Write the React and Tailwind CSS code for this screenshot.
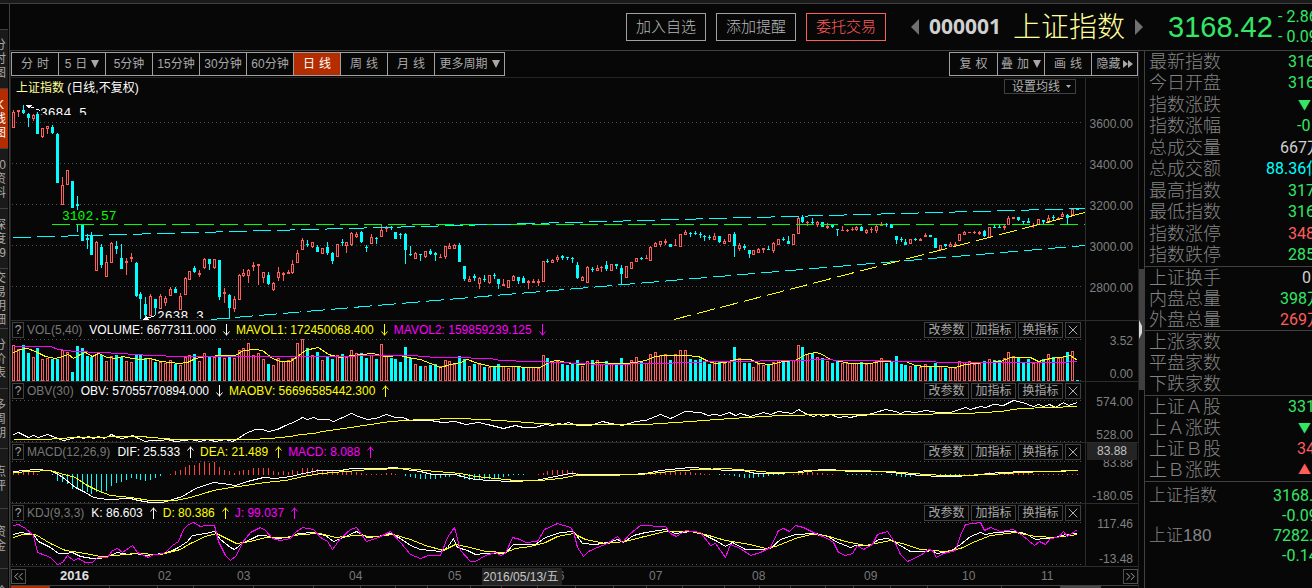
import React from 'react';
import { ChevronsLeft, ChevronsRight, X } from 'lucide-react';

const RED = '#ff5c5c';
const CYAN = '#00ffff';
const YELLOW = '#ffff00';
const MAGENTA = '#ff00ff';

// direction, high, body top, body bottom, low
const CANDLES = `u 110 112 128 128;u 110 110 112 117;d 105 110 113 114;d 113 114 118 127;u 114 115 119 121;d 112 114 134 134;u 128 128 137 138;u 126 126 129 134;d 125 127 133 134;d 133 134 183 183;
u 177 185 205 205;u 170 170 185 185;d 181 181 208 208;d 196 204 206 232;d 222 222 241 241;d 234 238 240 249;d 232 235 255 255;u 241 242 271 271;d 244 247 265 268;u 255 262 277 277;
u 242 243 263 263;d 241 246 249 254;d 244 258 269 269;u 258 261 263 275;u 253 257 259 262;d 262 263 296 297;d 292 294 299 319;d 297 304 315 318;u 294 296 316 316;d 299 299 308 315;
u 294 296 309 309;u 296 298 303 306;u 287 289 296 296;d 287 289 293 293;u 293 296 310 310;u 277 278 295 295;u 271 271 280 280;d 266 268 272 273;u 270 273 275 277;u 258 259 268 269;
d 259 259 264 270;u 259 259 268 269;d 260 260 297 300;u 288 292 294 303;d 294 295 308 319;u 296 299 309 312;u 274 275 300 300;u 269 273 276 277;u 269 270 276 283;u 262 265 267 271;
u 264 264 266 285;u 272 272 278 283;d 272 275 284 285;u 282 283 290 291;u 267 272 278 281;u 272 273 275 281;u 270 272 274 274;u 260 264 273 274;u 250 253 263 263;u 238 240 250 250;
d 240 244 245 247;u 242 242 247 248;d 245 247 252 252;u 248 248 254 254;d 242 247 253 255;d 252 253 261 264;u 244 244 257 257;d 239 242 243 246;u 242 242 246 253;u 232 233 245 246;
u 232 234 237 238;d 231 232 242 243;d 245 247 248 252;u 234 237 244 244;d 237 238 239 244;u 225 230 237 237;u 226 228 229 232;d 226 227 228 230;d 232 232 239 239;d 233 234 235 239;
d 233 234 250 264;d 246 254 255 256;u 252 253 259 259;d 254 254 255 261;u 251 251 257 258;d 249 251 254 255;d 252 253 255 261;u 254 257 258 258;u 246 246 257 259;u 243 246 249 249;
u 244 245 249 249;d 243 245 262 262;d 266 266 279 281;u 276 279 282 282;d 274 276 278 281;u 277 278 284 289;d 275 279 280 282;u 275 275 283 284;d 273 275 276 279;d 279 279 284 289;
u 279 284 286 286;u 280 280 288 288;u 275 276 281 281;d 277 277 281 284;d 276 278 283 283;u 280 281 283 289;u 279 281 283 283;u 279 281 283 286;u 261 261 282 282;d 259 261 262 263;
u 259 260 263 263;u 255 257 260 262;d 255 256 258 260;d 257 257 258 260;d 257 258 259 263;d 262 265 278 279;u 276 277 281 281;u 266 267 283 283;d 267 269 270 272;u 265 268 271 271;
u 266 267 268 272;d 261 265 269 271;u 264 264 271 271;d 264 264 266 269;d 265 268 274 284;u 266 266 278 278;u 262 262 269 269;u 258 258 262 262;d 257 258 259 260;u 255 258 259 259;
u 246 247 261 261;u 242 243 247 247;u 241 241 245 247;u 239 241 243 245;d 244 244 247 247;u 239 245 246 246;u 234 234 247 247;u 230 232 235 235;d 232 233 234 237;d 231 233 234 235;
d 232 234 235 238;d 235 236 237 241;d 235 237 238 240;u 233 236 240 240;d 236 236 242 243;u 239 241 244 244;u 234 234 242 242;d 232 234 246 257;u 243 245 249 251;d 244 246 248 250;
d 250 250 254 258;u 250 250 255 255;u 248 249 253 253;u 248 248 250 253;d 246 249 250 250;u 242 243 251 253;u 239 239 245 245;d 237 239 240 241;d 236 241 244 244;u 234 234 245 245;
u 216 218 234 234;d 215 217 222 223;u 221 222 223 226;d 218 222 223 225;u 221 222 225 227;d 222 222 227 227;u 223 226 228 229;d 225 225 227 228;d 229 229 230 236;u 226 230 231 231;
u 229 230 231 232;u 227 229 230 231;u 226 227 230 231;d 226 227 231 231;u 229 230 233 234;u 227 229 230 233;u 225 226 231 233;u 222 225 226 226;d 223 224 225 227;d 224 224 228 228;
d 236 236 240 244;d 237 239 240 242;d 239 242 245 245;u 239 239 244 244;d 238 239 240 241;u 238 239 241 241;u 233 235 237 237;d 235 235 237 237;d 238 238 248 248;u 245 245 250 250;
d 244 244 246 247;u 242 244 247 247;u 242 244 246 246;u 234 234 241 241;u 231 232 235 235;u 232 232 233 233;u 231 232 233 234;u 231 232 234 235;d 230 231 236 237;u 227 227 238 238;
d 225 227 228 228;d 225 227 228 228;u 224 226 228 230;u 216 218 225 225;u 217 217 219 219;d 217 217 220 221;d 221 221 222 224;d 218 221 223 223;u 223 225 226 228;u 219 219 225 225;
d 220 220 222 224;u 215 218 223 223;d 215 217 218 220;u 217 218 220 220;u 212 214 217 217;d 214 215 218 224;u 209 209 215 215;d 209 209 210 210`
    .split(';')
    .map((row) => {
        const [dir, ...v] = row.trim().split(' ');
        const [high, top, bottom, low] = v.map(Number);
        return { up: dir === 'u', high, top, bottom, low };
    });

const VOLUMES = [
    345, 349, 345, 353, 357, 348, 359, 358, 359, 359, 350, 352, 372, 346, 348, 356, 357, 354, 355, 361,
    356, 355, 357, 361, 362, 354, 354, 358, 358, 362, 362, 363, 360, 364, 365, 357, 355, 354, 361, 353,
    357, 357, 348, 358, 355, 358, 350, 348, 343, 355, 353, 359, 364, 365, 358, 361, 360, 358, 343, 339,
    348, 355, 352, 360, 356, 359, 355, 354, 357, 350, 353, 353, 358, 355, 359, 344, 356, 358, 359, 362,
    347, 358, 364, 366, 366, 365, 364, 366, 360, 361, 364, 356, 359, 366, 364, 364, 367, 367, 367, 364,
    366, 368, 366, 367, 368, 367, 367, 368, 355, 358, 361, 361, 364, 365, 363, 360, 366, 361, 360, 360,
    364, 361, 364, 364, 358, 363, 360, 357, 362, 363, 354, 352, 355, 354, 360, 354, 350, 350, 359, 360,
    359, 362, 364, 361, 361, 363, 362, 347, 358, 363, 363, 367, 364, 365, 364, 362, 360, 360, 360, 360,
    345, 347, 354, 353, 357, 358, 361, 363, 360, 363, 363, 363, 363, 362, 364, 363, 361, 358, 363, 361,
    356, 364, 365, 366, 366, 367, 364, 366, 363, 366, 368, 367, 368, 361, 362, 361, 364, 362, 361, 359,
    360, 360, 358, 352, 356, 357, 362, 359, 363, 361, 359, 354, 357, 358, 357, 352, 351, 380,
];

const MACD_BARS = [
    3, 3, 3, 3, 3, 1, 0, 0, -1, -7, -8, -10, -15, -14, -17, -18, -20, -18, -18, -17,
    -12, -9, -8, -6, -4, -5, -6, -7, -6, -4, -2, 0, 1, 4, 5, 8, 10, 10, 12, 13,
    12, 13, 8, 5, 4, 2, 4, 5, 5, 7, 7, 7, 7, 4, 3, 4, 3, 5, 4, 7,
    7, 7, 6, 5, 5, 4, 3, 3, 3, 4, 3, 2, 1, 1, 1, 1, 2, 2, 1, 0,
    -2, -3, -4, -5, -5, -5, -5, -4, -3, -3, -1, -3, -5, -6, -6, -6, -5, -5, -4, -4,
    -3, -2, -1, -1, -1, 0, 0, 1, 2, 4, 5, 5, 5, 5, 4, 2, 1, 1, 1, 1,
    1, 1, 1, 1, 1, 1, 1, 1, 1, 1, 2, 2, 2, 3, 3, 4, 3, 3, 3, 2,
    2, 1, 1, 0, -1, -1, -1, -2, -3, -4, -4, -4, -3, -3, -2, -1, -1, -1, 0, 1,
    3, 3, 3, 3, 2, 2, 1, 1, 0, 0, -1, -1, -1, -1, -1, -1, -1, -1, 0, -1,
    -2, -3, -3, -3, -2, -2, -2, -2, -1, -1, -1, -1, -1, -1, 1, 1, 1, 1, 2, 3,
    2, 3, 3, 3, 3, 3, 3, 2, 1, 1, 1, 1, 1, 1, 1, 1, 1, 1,
];

const MAVOL1 = '13,352 20,349 27,348 35,351 45,356 55,358 62,356 68,354 73,358 80,354 85,352 92,356 98,353 107,357 115,358 122,356 132,358 140,359 150,358 160,361 170,362 178,363 187,362 195,358 205,356 225,355 235,355 243,350 255,349 262,350 272,358 280,361 290,361 297,356 305,350 313,348 318,347 328,354 340,357 352,355 362,354 372,353 385,356 400,355 412,358 420,359 430,363 440,367 450,364 460,362 467,359 475,362 490,366 510,366 530,367 540,367 550,361 558,360 565,362 580,364 590,363 600,362 615,363 625,363 635,362 645,360 655,356 665,355 685,355 698,356 708,361 715,363 725,362 735,359 750,359 758,363 770,364 783,361 795,360 805,354 815,352 820,353 830,359 840,361 850,363 870,363 880,361 905,361 915,365 925,366 940,366 955,367 965,364 975,363 985,362 1000,361 1010,357 1030,357 1038,361 1050,358 1060,357 1070,355 1077,360';
const MAVOL2 = '13,346 50,346 58,349 75,351 100,352 120,353 150,355 180,356 215,356 345,356 365,355 412,355 435,357 450,357 490,358 500,360 530,361 560,362 600,364 660,363 685,362 720,361 800,360 820,359 845,360 870,360 910,361 960,362 1060,362 1077,361';
const OBV = '13,434 18,432 28,437 33,435 38,437 47,434 55,437 63,440 72,438 78,436 83,438 88,436 93,438 98,436 104,438 111,434 117,437 122,438 132,435 138,438 145,441 150,440 160,440 167,439 175,441 185,440 190,439 200,441 207,439 215,441 225,439 232,441 238,438 245,433 255,429 262,429 268,431 277,429 285,425 295,421 302,417 307,419 313,417 318,419 328,419 333,421 340,418 351,413 358,416 367,419 375,418 386,414 395,417 402,417 410,420 430,420 442,422 455,421 465,424 478,422 487,424 503,428 515,425 523,427 535,427 545,424 552,425 558,423 562,424 568,422 577,425 590,425 602,421 610,423 622,425 635,421 645,420 660,414 670,418 685,411 700,412 708,415 714,414 720,415 729,412 735,415 740,413 750,416 763,412 770,414 778,411 785,412 792,413 798,409 805,413 813,416 818,414 823,416 830,414 838,417 845,416 850,417 858,415 865,415 875,412 885,409 895,411 900,413 905,411 915,412 925,410 938,412 950,412 965,407 970,409 980,406 985,407 993,404 1003,405 1013,400 1022,402 1033,406 1038,404 1043,406 1049,404 1055,407 1063,402 1068,405 1077,402';
const MAOBV = '13,439 45,439 58,438 75,437 140,436 175,439 250,439 270,438 290,436 300,434 313,433 322,431 350,427 370,424 390,421 420,419 460,418 500,420 540,423 560,424 620,424 645,424 690,421 730,418 780,415 830,414 900,414 966,413 1000,411 1020,408 1077,406';
const DIF = '13,471 25,470 35,469 50,470 58,474 65,479 75,487 85,492 93,497 107,499 130,498 138,500 150,502 162,502 172,499 182,496 195,488 213,482 222,483 235,485 247,481 263,477 275,478 290,476 303,473 318,470 340,470 352,468 380,468 395,467 405,469 420,471 432,474 455,474 465,477 475,479 490,480 510,481 535,480 550,477 560,475 570,473 580,474 605,474 630,474 645,473 660,470 690,467 706,468 725,470 743,470 755,473 775,473 795,472 805,470 830,469 850,471 880,471 900,473 920,475 940,476 955,476 980,474 1000,472 1025,471 1055,471 1077,470';
const DEA = '13,472 30,471 50,470 60,473 75,477 85,484 97,490 110,495 130,497 150,500 175,500 190,497 213,490 230,487 245,485 265,482 285,480 303,476 320,473 345,471 370,469 405,468 425,470 460,473 475,476 495,478 515,480 540,480 560,478 575,475 600,475 640,474 660,472 680,470 700,469 725,468 750,470 770,472 800,472 815,470 850,470 890,471 925,474 945,475 965,475 990,474 1020,472 1045,471 1077,470';
const KDJ_K = '13,534 20,532 33,534 38,541 50,547 58,553 65,553 72,552 80,556 92,558 100,558 107,556 117,552 128,554 135,553 145,555 162,553 170,551 178,547 187,541 192,535 205,533 214,531 220,539 230,547 234,549 243,542 250,539 258,535 265,535 275,538 288,537 298,533 313,532 325,535 333,541 343,537 356,531 367,537 378,536 390,533 400,538 410,545 420,549 440,551 447,547 453,538 457,547 467,550 475,554 485,553 505,553 513,544 535,544 545,537 560,532 573,531 582,543 595,544 607,542 617,539 623,542 633,535 645,532 665,529 675,533 690,531 703,534 717,541 725,546 732,542 745,549 760,549 770,548 780,539 795,534 815,533 828,536 835,541 850,547 855,545 870,545 878,539 888,538 898,544 910,551 925,551 932,550 936,553 950,551 960,544 970,536 980,532 985,534 995,532 1013,531 1025,533 1035,539 1045,538 1055,537 1065,534 1077,533';
const KDJ_D = '13,537 22,534 35,534 50,543 65,550 85,553 100,556 115,555 135,553 160,554 180,549 190,543 205,536 216,533 228,539 236,543 250,541 265,537 285,537 300,534 320,533 335,537 355,535 375,536 393,534 410,539 425,545 443,550 455,544 470,547 485,551 505,552 515,548 530,546 545,542 557,536 573,533 585,539 605,543 625,541 640,537 665,531 690,531 705,534 725,540 750,544 765,548 775,546 795,538 810,534 825,535 845,541 865,545 890,540 905,544 920,549 945,551 960,548 975,541 990,535 1015,532 1035,536 1055,537 1077,534';
const KDJ_J = '13,525 18,524 25,528 33,535 37,552 45,555 50,557 57,564 62,562 67,555 73,560 78,558 85,562 92,562 97,557 107,557 112,550 117,548 122,552 132,545 137,552 148,557 153,554 158,554 165,552 172,545 178,541 183,529 188,524 193,522 200,526 205,525 214,525 218,541 225,555 230,560 236,555 242,542 250,532 260,527 265,530 272,538 280,540 290,538 295,532 302,527 313,529 320,537 327,541 332,549 340,538 350,529 356,527 366,541 378,537 390,531 400,542 410,554 420,558 428,555 440,555 447,537 454,527 460,550 470,561 475,561 485,555 495,552 500,555 505,553 512,537 520,539 525,542 537,541 544,529 557,523 570,527 573,531 577,547 583,556 588,551 597,547 607,543 617,536 622,542 630,533 640,525 665,526 670,533 676,536 685,530 700,532 710,545 715,543 725,557 730,544 740,548 750,555 760,552 770,547 778,530 783,528 789,531 795,525 803,527 815,533 827,538 833,542 838,552 845,555 852,553 857,545 863,549 872,544 877,534 887,531 895,543 900,554 907,561 920,555 928,549 932,550 936,557 943,553 955,550 960,535 965,524 980,522 984,530 990,527 1000,531 1013,529 1022,535 1034,545 1039,541 1045,544 1050,538 1058,537 1063,531 1067,536 1077,529';

const barX = (i) => Math.floor(13.45 + i * 4.904);

const Line = ({ points, color }) => (
    <polyline points={points} fill="none" stroke={color} strokeWidth="1" transform="translate(0.5 0.5)" />
);

const Dots = ({ y }) => (
    <line x1="12" x2="1082" y1={y + 0.5} y2={y + 0.5} stroke="#505050" strokeWidth="1" strokeDasharray="1 3" />
);

const Plot = ({ top, height, className, children }) => (
    <svg
        viewBox={`11 ${top} 1074 ${height}`}
        preserveAspectRatio="none"
        shapeRendering="crispEdges"
        className={`block w-full ${className}`}
    >
        {children}
    </svg>
);

const Candle = ({ i, up, high, top, bottom, low }) => {
    const x = barX(i);
    const color = up ? RED : CYAN;
    const hollow = up && bottom - top > 2;
    return (
        <g fill={color}>
            {top > high && <rect x={x} y={high} width="1" height={top - high} />}
            {low > bottom && <rect x={x} y={bottom} width="1" height={low - bottom} />}
            {hollow ? (
                <rect x={x - 0.5} y={top + 0.5} width="2" height={bottom - top - 1} fill="#070707" stroke={color} />
            ) : (
                <rect x={x - 1} y={top} width="3" height={Math.max(1, bottom - top)} />
            )}
        </g>
    );
};

const PriceChart = () => (
    <Plot top={78} height={242} className="h-[242px]">
        {[122, 163, 204, 245, 286].map((y) => (
            <Dots key={y} y={y} />
        ))}
        {CANDLES.map((c, i) => (
            <Candle key={i} i={i} {...c} />
        ))}
        <g fill="none" strokeWidth="1" strokeDasharray="18 6">
            <line x1="52" y1="224.5" x2="1085" y2="224.5" stroke="#00ff00" />
            <line x1="13" y1="237.5" x2="1085" y2="208.5" stroke={CYAN} />
            <line x1="211" y1="319.5" x2="1085" y2="245.5" stroke={CYAN} />
            <line x1="674" y1="319.5" x2="1085" y2="212.5" stroke={YELLOW} />
        </g>
        <g stroke="#fff" fill="#fff">
            <path d="M40 110.5L30 106.5" fill="none" strokeDasharray="4 2" />
            <path d="M25 105H32L29 109Z" stroke="none" />
            <path d="M155 315.5L147 318.5" fill="none" />
            <path d="M142 320L147 316L149 320Z" stroke="none" />
        </g>
    </Plot>
);

const Arrow = ({ up }) => (
    <svg width="7" height="12" viewBox="0 0 7 12" className="ml-[7px] mr-[6px] shrink-0" fill="none" stroke="currentColor">
        {up ? <path d="M3.5 0.5V12M0.5 4.5L3.5 1L6.5 4.5" /> : <path d="M3.5 0V11.5M0.5 7.5L3.5 11L6.5 7.5" />}
    </svg>
);

const SmallButton = ({ children }) => (
    <button className="h-4 w-[45px] border border-[#404040] text-center text-xs leading-[15px] text-[#a8a8a8]">
        {children}
    </button>
);

const Indicator = ({ name, readings, axis, badge, tall, children }) => (
    <section className={`flex border-t border-[#2c2c2c] ${tall ? 'h-[63px]' : 'h-[61px]'}`}>
        <div className="min-w-0 flex-1">
            <div className="flex h-[18px] items-center justify-between pl-px pr-1">
                <div className="flex items-center whitespace-nowrap text-xs leading-4">
                    <button className="mr-[3px] h-4 w-3 border border-[#404040] text-center leading-[14px] text-[#a8a8a8]">?</button>
                    <span className="mr-[7px] text-[#787878]">{name}</span>
                    {readings.map((r) => (
                        <span key={r.text} className={`flex items-center ${r.color}`}>
                            {r.text}
                            <Arrow up={r.up} />
                        </span>
                    ))}
                </div>
                <div className="flex gap-[2px]">
                    <SmallButton>改参数</SmallButton>
                    <SmallButton>加指标</SmallButton>
                    <SmallButton>换指标</SmallButton>
                    <button aria-label="关闭" className="flex h-4 w-4 items-center justify-center border border-[#404040] text-[#b0b0b0]">
                        <X size={16} strokeWidth={1.5} className="shrink-0" />
                    </button>
                </div>
            </div>
            {children}
        </div>
        <div className="relative flex w-[53px] shrink-0 flex-col justify-between border-l border-[#2c2c2c] pr-[5px] pt-[14px] text-right text-xs leading-[13px] text-[#808080]">
            <span>{axis[0]}</span>
            <span>{axis[1]}</span>
            {badge && (
                <span className="absolute left-px right-px top-0 bg-[#242424] pr-[10px] leading-[17px] text-[#c0c0c0]">{badge}</span>
            )}
        </div>
    </section>
);

const DownMark = () => (
    <svg width="8" height="8" viewBox="0 0 8 8" fill="currentColor"><path d="M0 0H8L4 8Z" /></svg>
);

const ToolButton = ({ text, menu, className }) => (
    <button className={`flex items-center justify-center gap-1 whitespace-nowrap ${className}`}>
        {text.split(' ').map((part) => (
            <span key={part}>{part}</span>
        ))}
        {menu && <DownMark />}
    </button>
);

const Toolbar = () => (
    <div className="flex h-[27px] items-center justify-between border-b border-[#242424] text-xs text-[#a8a8a8]">
        <div className="flex h-6 border border-[#a0a0a0]">
            {['分 时', '5 日', '5分钟', '15分钟', '30分钟', '60分钟', '日 线', '周 线', '月 线'].map((t) => (
                <ToolButton
                    key={t}
                    text={t}
                    menu={t === '5 日'}
                    className={`w-[47px] border-r border-[#a0a0a0] ${t === '日 线' ? 'bg-[#b32d00] text-white' : ''}`}
                />
            ))}
            <ToolButton text="更多周期" menu className="w-[69px]" />
        </div>
        <div className="flex h-6 border border-[#a0a0a0]">
            <ToolButton text="复 权" className="w-12 border-r border-[#a0a0a0]" />
            <ToolButton text="叠 加" menu className="w-[47px] border-r border-[#a0a0a0]" />
            <ToolButton text="画 线" className="w-[47px] border-r border-[#a0a0a0]" />
            <button className="flex w-[45px] items-center justify-center gap-[2px] whitespace-nowrap">
                隐藏
                <svg width="10" height="8" viewBox="0 0 10 8" fill="currentColor">
                    <path d="M0 0L5 4L0 8ZM5 0L10 4L5 8Z" />
                </svg>
            </button>
        </div>
    </div>
);

const TriLeft = () => (
    <svg width="8" height="16" viewBox="0 0 8 16" fill="#707070"><path d="M8 0V16L0 8Z" /></svg>
);
const TriRight = () => (
    <svg width="8" height="16" viewBox="0 0 8 16" fill="#707070"><path d="M0 0V16L8 8Z" /></svg>
);

const Header = () => (
    <header className="flex h-[47px] shrink-0 items-center justify-end overflow-hidden border-b border-[#404040] whitespace-nowrap">
        <div className="flex gap-[10px] text-[15px] font-light">
            <button className="h-7 w-20 border border-[#a0a0a0] text-[#b8b8b8]">加入自选</button>
            <button className="h-7 w-20 border border-[#a0a0a0] text-[#b8b8b8]">添加提醒</button>
            <button className="h-7 w-20 border border-[#ff5c5c] text-[#ff5c5c]">委托交易</button>
        </div>
        <button aria-label="上一个" className="ml-[25px]"><TriLeft /></button>
        <span className="ml-[10px] w-[72px] pb-[2px] font-['Noto_Sans'] text-[21px] font-bold leading-7 text-[#d0d0d0]">000001</span>
        <h1 className="ml-3 w-[114px] pt-[2px] text-[28px] font-light leading-8 text-[#ffff99]">上证指数</h1>
        <button aria-label="下一个" className="ml-2"><TriRight /></button>
        <span className="ml-[25px] w-[110px] text-[29px] leading-8 text-[#33e666]">3168.42</span>
        <div className="w-[34px] overflow-hidden font-[Roboto] text-[16px] leading-5 text-[#33e666]">
            <div className="flex gap-1"><span className="w-[6px]">-</span>2.86</div>
            <div className="flex gap-1"><span className="w-[6px]">-</span>0.09</div>
        </div>
    </header>
);

const GREEN_TXT = 'text-[16px] text-[#33e666]';
const RED_TXT = 'text-[16px] text-[#ff5c5c]';
const DOWN_MARK = 'pl-[38px] text-[13px] text-[#33e666]';

const QUOTE_GROUPS = [
    {
        height: 'h-[216px]',
        rows: [
            ['最新指数', '316', `pl-7 ${GREEN_TXT}`],
            ['今日开盘', '316', `pl-7 ${GREEN_TXT}`],
            ['指数涨跌', '▼', DOWN_MARK],
            ['指数涨幅', '-0', `pl-[37px] ${GREEN_TXT}`],
            ['总成交量', '667万', 'pl-5 text-[16px] text-[#d0d0d0]'],
            ['总成交额', '88.36亿', 'pl-[6px] text-[16px] font-medium text-[#00ffff]'],
            ['最高指数', '317', `pl-7 ${GREEN_TXT}`],
            ['最低指数', '316', `pl-7 ${GREEN_TXT}`],
            ['指数涨停', '348', `pl-7 ${RED_TXT}`],
            ['指数跌停', '285', `pl-7 ${GREEN_TXT}`],
        ],
    },
    {
        height: 'h-16',
        rows: [
            ['上证换手', '0', 'pl-[42px] text-[16px] text-[#d0d0d0]'],
            ['内盘总量', '398万', `pl-5 ${GREEN_TXT}`],
            ['外盘总量', '269万', `pl-5 ${RED_TXT}`],
        ],
    },
    {
        height: 'h-[65px]',
        rows: [['上涨家数', '', ''], ['平盘家数', '', ''], ['下跌家数', '', '']],
    },
    {
        height: 'h-[86px]',
        rows: [
            ['上证Ａ股', '331', `pl-7 ${GREEN_TXT}`],
            ['上Ａ涨跌', '▼', DOWN_MARK],
            ['上证Ｂ股', '34', `pl-[37px] ${RED_TXT}`],
            ['上Ｂ涨跌', '▲', 'pl-[38px] text-[13px] text-[#ff5c5c]'],
        ],
    },
];

const QuotePanel = () => (
    <aside className="w-[168px] shrink-0 overflow-hidden border-l border-[#404040] text-[18px] font-light text-[#848484]">
        {QUOTE_GROUPS.map((g) => (
            <div key={g.height} className={`flex flex-col border-b border-[#404040] pl-1 ${g.height}`}>
                {g.rows.map(([label, value, cls]) => (
                    <div key={label} className="flex min-h-0 flex-1 items-center whitespace-nowrap leading-5">
                        <span className="w-[111px] shrink-0">{label}</span>
                        <span className={`font-[Roboto,'Noto_Sans_CJK_SC'] font-normal ${cls}`}>{value}</span>
                    </div>
                ))}
            </div>
        ))}
        <div className="pl-1 pt-1 leading-5">
            {[
                ['上证指数', '3168.', 'pl-[13px]'],
                ['', '-0.09', 'pl-[22px]'],
                ['上证180', '7282.', 'pl-[13px]'],
                ['', '-0.14', 'pl-[22px]'],
            ].map(([label, value, pad]) => (
                <div key={value} className="flex h-5 items-center whitespace-nowrap">
                    <span className="w-[111px] shrink-0 text-[17px]">{label}</span>
                    <span className={`font-[Roboto] text-[16px] font-normal text-[#33e666] ${pad}`}>{value}</span>
                </div>
            ))}
        </div>
    </aside>
);

const SIDE_TABS = [
    ['分', '时', '图'],
    ['K', '线', '图'],
    ['10', '资', '料'],
    ['深', '度', '9'],
    ['交', '易', '明', '细'],
    ['分', '价', '表'],
    ['多', '周', '期'],
    ['点', '评'],
    ['资', '金'],
    ['诊'],
];

const Sidebar = () => (
    <nav className="flex w-[9px] shrink-0 flex-col overflow-hidden border-t-[25px] border-[#070707] pr-px">
        {SIDE_TABS.map((chars, i) => (
            <button
                key={i}
                className={`flex w-full flex-col items-end overflow-hidden border-t border-[#404040] pr-[2px] text-xs leading-[14px] ${
                    i === 0 ? 'h-[59px] justify-center' : i === 9 ? 'h-[22px] pt-4' : 'h-[60px] justify-center'
                } ${i === 1 ? 'bg-[#b32d00] text-white' : 'bg-[#1a1a1a] text-[#a8a8a8]'}`}
            >
                {chars.map((c, n) => (
                    <span key={n} className={`whitespace-nowrap ${c === 'K' ? 'w-3' : ''}`}>{c}</span>
                ))}
            </button>
        ))}
    </nav>
);

const DateAxis = () => (
    <div className="relative flex h-[19px] items-center border-t border-[#2c2c2c] text-xs text-[#787878]">
        <button aria-label="向前" className="flex h-[15px] w-[15px] items-center justify-center border border-[#505050] text-[#b0b0b0]">
            <ChevronsLeft size={15} strokeWidth={1.5} className="shrink-0" />
        </button>
        <div className="flex h-full min-w-0 flex-1 pl-[34px] leading-[18px]">
            <span className="flex-[98_1_0px] text-[13px] font-bold text-[#e0e0e0]">2016</span>
            <span className="flex-[79_1_0px]">02</span>
            <span className="flex-[112_1_0px]">03</span>
            <span className="flex-[99_1_0px]">04</span>
            <span className="flex-[103_1_0px]">05</span>
            <span className="flex-[98_1_0px]">06</span>
            <span className="flex-[103_1_0px]">07</span>
            <span className="flex-[112_1_0px]">08</span>
            <span className="flex-[98_1_0px]">09</span>
            <span className="flex-[79_1_0px]">10</span>
            <span className="flex-[82_1_0px]">11</span>
        </div>
        <button aria-label="向后" className="flex h-[15px] w-[15px] items-center justify-center border border-[#505050] text-[#b0b0b0]">
            <ChevronsRight size={15} strokeWidth={1.5} className="shrink-0" />
        </button>
        <span className="absolute left-[471px] top-px h-[17px] w-20 whitespace-nowrap bg-[#242424] pl-px leading-[19px] text-[#c8c8c8]">
            2016/05/13/五
        </span>
    </div>
);

// tops of the tabs below the date axis
const BottomTabs = () => (
    <div className="flex h-[3px] overflow-hidden border-t border-[#404040]">
        <span className="w-[39px] border-r border-[#505050] bg-[#b32d00]" />
        {[60, 48, 36, 60, 60, 47, 35, 32, 43, 31, 36, 38, 38, 33, 36, 42, 35, 31, 35, 28, 37, 37, 74, 59].map((w, i) => (
            <span key={i} className="border-r border-[#404040]" style={{ width: w }} />
        ))}
        <span className="w-10 bg-[#484848]" />
    </div>
);

const App = () => (
    <div className="flex min-h-screen w-full flex-col overflow-hidden bg-[#070707] font-['Liberation_Sans','Noto_Sans_CJK_SC',sans-serif] text-[#a8a8a8]">
        <div className="h-1 shrink-0 border-b border-[#404040] bg-[#1a1a1a]" />
        <div className="flex flex-1">
            <Sidebar />
            <div className="flex min-w-0 flex-1 flex-col border-l border-[#404040]">
                <Header />
                <div className="flex min-h-0 flex-1">
                    <main className="min-w-0 flex-1 border-x border-[#242424]">
                        <Toolbar />
                        {/* Price chart */}
                        <section className="flex">
                            <div className="relative min-w-0 flex-1">
                                <PriceChart />
                                <h2 className="absolute left-[5px] top-0 whitespace-pre text-xs leading-5 text-white">
                                    <span className="text-[#ffff99]">上证指数</span> (日线,不复权)
                                </h2>
                                <button className="absolute right-[9px] top-px flex h-[15px] w-[72px] items-center justify-between border border-[#404040] pl-[7px] pr-1 text-xs leading-[14px] text-[#b0b0b0]">
                                    设置均线
                                    <svg width="5" height="3" viewBox="0 0 5 3" fill="currentColor"><path d="M0 0H5L2.5 3Z" /></svg>
                                </button>
                                <span className="absolute left-[29px] top-[29px] h-2 overflow-hidden font-['Liberation_Mono'] text-[13px] leading-[14px] text-white">3684.5</span>
                                <span className="absolute left-[51px] top-[132px] bg-[#070707] font-['Liberation_Mono'] text-[13px] leading-[14px] text-[#00ff00]">3102.57</span>
                                <span className="absolute left-[146px] top-[232px] h-2 overflow-hidden font-['Liberation_Mono'] text-[13px] leading-[14px] text-white">2638.3</span>
                            </div>
                            <div className="flex w-[53px] shrink-0 flex-col border-l border-[#2c2c2c] pr-[5px] pt-[26px] text-right text-xs leading-[41px] text-[#808080]">
                                <span>3600.00</span>
                                <span>3400.00</span>
                                <span>3200.00</span>
                                <span>3000.00</span>
                                <span>2800.00</span>
                            </div>
                        </section>
                        {/* Indicators */}
                        <Indicator
                            name="VOL(5,40)"
                            readings={[
                                { text: 'VOLUME: 6677311.000', color: 'text-white' },
                                { text: 'MAVOL1: 172450068.400', color: 'text-[#ffff00]' },
                                { text: 'MAVOL2: 159859239.125', color: 'text-[#ff00ff]' },
                            ]}
                            axis={['3.52', '0.00']}
                        >
                            <Plot top={339} height={42} className="h-[42px]">
                                <Dots y={339} />
                                <Dots y={380} />
                                {VOLUMES.map((top, i) => {
                                    const x = barX(i);
                                    return CANDLES[i].up ? (
                                        <rect key={i} x={x - 0.5} y={top + 0.5} width="2" height={380 - top} fill="#070707" stroke={RED} />
                                    ) : (
                                        <rect key={i} x={x - 1} y={top} width="3" height={381 - top} fill={CYAN} />
                                    );
                                })}
                                <Line points={MAVOL1} color={YELLOW} />
                                <Line points={MAVOL2} color={MAGENTA} />
                            </Plot>
                        </Indicator>
                        <Indicator
                            name="OBV(30)"
                            readings={[
                                { text: 'OBV: 57055770894.000', color: 'text-white' },
                                { text: 'MAOBV: 56696585442.300', color: 'text-[#ffff00]', up: true },
                            ]}
                            axis={['574.00', '528.00']}
                        >
                            <Plot top={400} height={42} className="h-[42px]">
                                <Dots y={400} />
                                <Dots y={441} />
                                <Line points={OBV} color="#fff" />
                                <Line points={MAOBV} color={YELLOW} />
                            </Plot>
                        </Indicator>
                        <Indicator
                            name="MACD(12,26,9)"
                            readings={[
                                { text: 'DIF: 25.533', color: 'text-white', up: true },
                                { text: 'DEA: 21.489', color: 'text-[#ffff00]', up: true },
                                { text: 'MACD: 8.088', color: 'text-[#ff00ff]', up: true },
                            ]}
                            axis={['83.88', '-180.05']}
                            badge="83.88"
                        >
                            <Plot top={461} height={42} className="h-[42px]">
                                <Dots y={461} />
                                <Dots y={502} />
                                {MACD_BARS.map((v, i) =>
                                    v === 0 ? null : (
                                        <rect
                                            key={i}
                                            x={barX(i)}
                                            y={v > 0 ? 475 - v : 474}
                                            width="1"
                                            height={Math.abs(v)}
                                            fill={v > 0 ? '#ff4040' : CYAN}
                                        />
                                    )
                                )}
                                <Line points={DIF} color="#fff" />
                                <Line points={DEA} color={YELLOW} />
                            </Plot>
                        </Indicator>
                        <Indicator
                            name="KDJ(9,3,3)"
                            readings={[
                                { text: 'K: 86.603', color: 'text-white', up: true },
                                { text: 'D: 80.386', color: 'text-[#ffff00]', up: true },
                                { text: 'J: 99.037', color: 'text-[#ff00ff]', up: true },
                            ]}
                            axis={['117.46', '-13.48']}
                            tall
                        >
                            <Plot top={522} height={44} className="h-[44px]">
                                <Dots y={522} />
                                <Dots y={564} />
                                <Line points={KDJ_K} color="#fff" />
                                <Line points={KDJ_D} color={YELLOW} />
                                <Line points={KDJ_J} color={MAGENTA} />
                            </Plot>
                        </Indicator>
                        <DateAxis />
                        <BottomTabs />
                    </main>
                    {/* Splitter */}
                    <div className="flex w-[5px] shrink-0 flex-col pt-[218px]">
                        <div className="h-[121px] bg-[#404040] pt-[51px]">
                            <svg width="4" height="19" viewBox="0 0 4 19" fill="#d8d8d8"><path d="M0 0L3 6V13L0 19Z" /></svg>
                        </div>
                    </div>
                    <QuotePanel />
                </div>
            </div>
        </div>
    </div>
);

export default App;
